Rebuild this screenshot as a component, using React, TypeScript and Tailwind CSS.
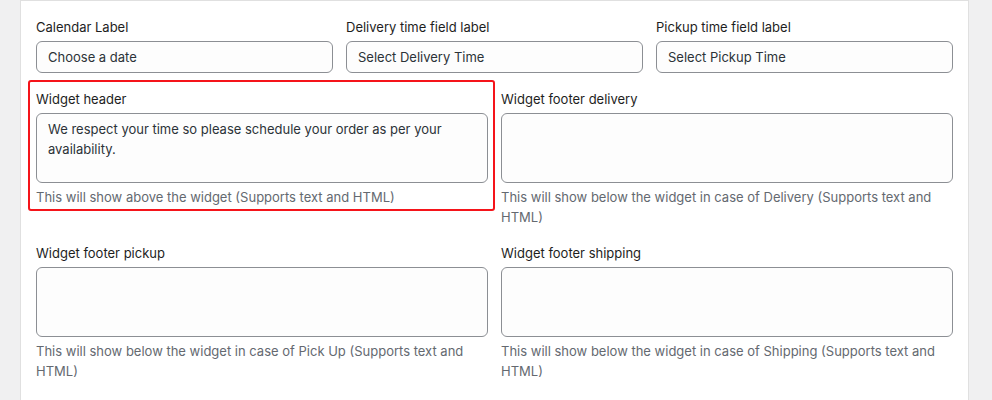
import type { ReactNode } from "react";

const font = { fontFamily: "Inter, 'Noto Sans', sans-serif" };

function Label({ children }: { children: ReactNode }) {
  return <label className="block text-[13px] leading-[18px] text-[#1e1e1e] mb-[5px]">{children}</label>;
}

function TextField({ label, value }: { label: string; value: string }) {
  return (
    <div>
      <Label>{label}</Label>
      <input
        readOnly
        value={value}
        className="block w-full h-[32px] rounded-[6px] border border-[#8c8f94] bg-[#fdfdfd] px-[11px] text-[13px] text-[#2c3338] outline-none"
      />
    </div>
  );
}

function AreaField({
  label,
  value = "",
  help,
  marked = false,
}: {
  label: string;
  value?: string;
  help: string;
  marked?: boolean;
}) {
  return (
    <div className="relative self-start">
      {marked && (
        <div className="pointer-events-none absolute -left-[8px] -top-[10px] -right-[7px] -bottom-[4px] rounded-[3px] border-2 border-[#f5141a]" />
      )}
      <Label>{label}</Label>
      <textarea
        readOnly
        value={value}
        className="block w-full h-[70px] resize-none rounded-[6px] border border-[#8c8f94] bg-[#fdfdfd] px-[11px] py-[5px] text-[13px] leading-[20px] text-[#2c3338] outline-none"
      />
      <p className="mt-[4px] text-[13px] leading-[20px] text-[#646970]">{help}</p>
    </div>
  );
}

export default function App() {
  return (
    <div className="min-h-screen bg-[#f0f0f1] pl-[20px] pr-[23px]" style={font}>
      <div className="bg-white border-x border-t border-[#e0e0e0] px-[15px] pt-[17px] pb-8 min-h-[400px]">
        <div className="grid grid-cols-3 gap-x-[13px] mb-[17px]">
          <TextField label="Calendar Label" value="Choose a date" />
          <TextField label="Delivery time field label" value="Select Delivery Time" />
          <TextField label="Pickup time field label" value="Select Pickup Time" />
        </div>
        <div className="grid grid-cols-2 gap-x-[13px] gap-y-[17px]">
          <AreaField
            marked
            label="Widget header"
            value="We respect your time so please schedule your order as per your availability."
            help="This will show above the widget (Supports text and HTML)"
          />
          <AreaField
            label="Widget footer delivery"
            help="This will show below the widget in case of Delivery (Supports text and HTML)"
          />
          <AreaField
            label="Widget footer pickup"
            help="This will show below the widget in case of Pick Up (Supports text and HTML)"
          />
          <AreaField
            label="Widget footer shipping"
            help="This will show below the widget in case of Shipping (Supports text and HTML)"
          />
        </div>
      </div>
    </div>
  );
}
